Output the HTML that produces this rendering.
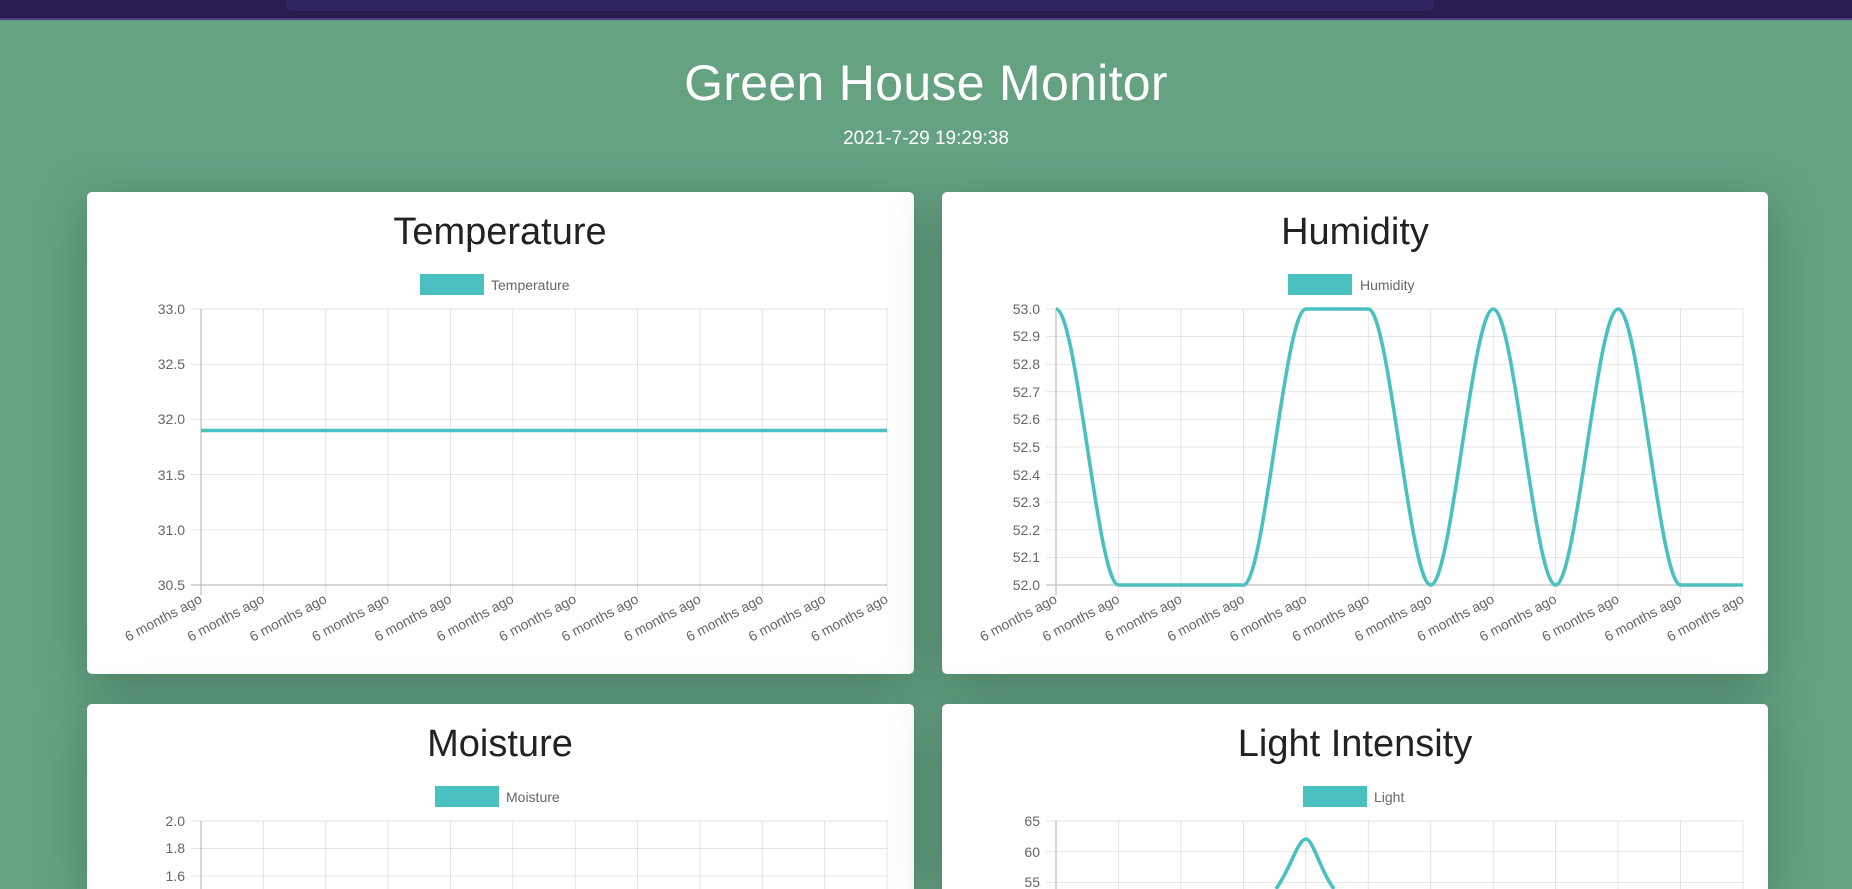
<!DOCTYPE html>
<html><head><meta charset="utf-8"><style>
html,body{margin:0;padding:0;overflow:hidden}
body{width:1852px;height:889px;overflow:hidden;position:relative;background:#65a282;font-family:"Liberation Sans",sans-serif}
.top{position:absolute;left:0;top:0;width:1852px;height:18px;background:#2a1c50;border-bottom:2px solid #4a3d80}
.top .in{position:absolute;left:286px;top:0;width:1148px;height:11px;background:#302560;border-radius:0 0 6px 6px}
.card{position:absolute;background:#fff;border-radius:5px;box-shadow:0 12px 50px rgba(30,60,45,0.35)}
.cut{border-radius:5px 5px 0 0}
h1{position:absolute;left:0;width:1852px;top:54px;margin:0;text-align:center;color:#fff;font-weight:300;font-size:50px;letter-spacing:0.3px}
.sub{position:absolute;left:0;width:1852px;top:128px;text-align:center;color:#fff;font-size:19px}
svg{position:absolute;left:0;top:0}
</style></head><body>
<div class="top"><div class="in"></div></div>
<h1>Green House Monitor</h1>
<div class="sub">2021-7-29 19:29:38</div>
<div class="card" style="left:87px;top:192px;width:827px;height:482px"></div>
<div class="card" style="left:942px;top:192px;width:826px;height:482px"></div>
<div class="card cut" style="left:87px;top:704px;width:827px;height:185px"></div>
<div class="card cut" style="left:942px;top:704px;width:826px;height:185px"></div>
<svg width="1852" height="889" viewBox="0 0 1852 889" font-family="Liberation Sans, sans-serif">
<g font-size="38" fill="#222" text-anchor="middle">
<text x="500" y="244">Temperature</text>
<text x="1355" y="244">Humidity</text>
<text x="500" y="756">Moisture</text>
<text x="1355" y="756">Light Intensity</text>
</g>
<g fill="#4bc0c0">
<rect x="420" y="274" width="64" height="21"/>
<rect x="1288" y="274" width="64" height="21"/>
<rect x="435" y="786" width="64" height="21"/>
<rect x="1303" y="786" width="64" height="21"/>
</g>
<g font-size="14" fill="#666">
<text x="491" y="290">Temperature</text>
<text x="1360" y="290">Humidity</text>
<text x="506" y="802">Moisture</text>
<text x="1374" y="802">Light</text>
</g>
<g stroke="rgba(0,0,0,0.1)" stroke-width="1" fill="none">
<path d="M263.4,309V595M325.7,309V595M388.1,309V595M450.5,309V595M512.8,309V595M575.2,309V595M637.5,309V595M699.9,309V595M762.3,309V595M824.6,309V595M887,309V595"/>
<path d="M191,309H887M191,364.2H887M191,419.4H887M191,474.6H887M191,529.8H887"/>
<path d="M1118.5,309V595M1180.9,309V595M1243.4,309V595M1305.8,309V595M1368.3,309V595M1430.7,309V595M1493.2,309V595M1555.6,309V595M1618.1,309V595M1680.5,309V595M1743,309V595"/>
<path d="M1046,309H1743M1046,336.6H1743M1046,364.2H1743M1046,391.8H1743M1046,419.4H1743M1046,447H1743M1046,474.6H1743M1046,502.2H1743M1046,529.8H1743M1046,557.4H1743"/>
<path d="M263.4,821V889M325.7,821V889M388.1,821V889M450.5,821V889M512.8,821V889M575.2,821V889M637.5,821V889M699.9,821V889M762.3,821V889M824.6,821V889M887,821V889"/>
<path d="M191,821H887M191,848.5H887M191,876H887"/>
<path d="M1118.5,821V889M1180.9,821V889M1243.4,821V889M1305.8,821V889M1368.3,821V889M1430.7,821V889M1493.2,821V889M1555.6,821V889M1618.1,821V889M1680.5,821V889M1743,821V889"/>
<path d="M1046,821H1743M1046,851.7H1743M1046,882.4H1743"/>
</g>
<g stroke="rgba(0,0,0,0.25)" stroke-width="1.2" fill="none">
<path d="M201,309V595M191,585H887"/>
<path d="M1056,309V595M1046,585H1743"/>
<path d="M201,821V889M1056,821V889"/>
</g>
<g font-size="14" fill="#666" text-anchor="end">
<text x="185" y="314">33.0</text><text x="185" y="369">32.5</text><text x="185" y="424">32.0</text><text x="185" y="480">31.5</text><text x="185" y="535">31.0</text><text x="185" y="590">30.5</text>
<text x="1040" y="314">53.0</text><text x="1040" y="341">52.9</text><text x="1040" y="369">52.8</text><text x="1040" y="397">52.7</text><text x="1040" y="424">52.6</text><text x="1040" y="452">52.5</text><text x="1040" y="480">52.4</text><text x="1040" y="507">52.3</text><text x="1040" y="535">52.2</text><text x="1040" y="562">52.1</text><text x="1040" y="590">52.0</text>
<text x="185" y="826">2.0</text><text x="185" y="853">1.8</text><text x="185" y="881">1.6</text>
<text x="1040" y="826">65</text><text x="1040" y="857">60</text><text x="1040" y="887">55</text>
</g>
<g font-size="14" fill="#666" text-anchor="end">
<text transform="translate(203,602) rotate(-28)">6 months ago</text>
<text transform="translate(265.4,602) rotate(-28)">6 months ago</text>
<text transform="translate(327.7,602) rotate(-28)">6 months ago</text>
<text transform="translate(390.1,602) rotate(-28)">6 months ago</text>
<text transform="translate(452.5,602) rotate(-28)">6 months ago</text>
<text transform="translate(514.8,602) rotate(-28)">6 months ago</text>
<text transform="translate(577.2,602) rotate(-28)">6 months ago</text>
<text transform="translate(639.5,602) rotate(-28)">6 months ago</text>
<text transform="translate(701.9,602) rotate(-28)">6 months ago</text>
<text transform="translate(764.3,602) rotate(-28)">6 months ago</text>
<text transform="translate(826.6,602) rotate(-28)">6 months ago</text>
<text transform="translate(889,602) rotate(-28)">6 months ago</text>
<text transform="translate(1058,602) rotate(-28)">6 months ago</text>
<text transform="translate(1120.5,602) rotate(-28)">6 months ago</text>
<text transform="translate(1182.9,602) rotate(-28)">6 months ago</text>
<text transform="translate(1245.4,602) rotate(-28)">6 months ago</text>
<text transform="translate(1307.8,602) rotate(-28)">6 months ago</text>
<text transform="translate(1370.3,602) rotate(-28)">6 months ago</text>
<text transform="translate(1432.7,602) rotate(-28)">6 months ago</text>
<text transform="translate(1495.2,602) rotate(-28)">6 months ago</text>
<text transform="translate(1557.6,602) rotate(-28)">6 months ago</text>
<text transform="translate(1620.1,602) rotate(-28)">6 months ago</text>
<text transform="translate(1682.5,602) rotate(-28)">6 months ago</text>
<text transform="translate(1745,602) rotate(-28)">6 months ago</text>
</g>
<g stroke="#4bc0c0" stroke-width="3.6" fill="none" stroke-linejoin="round">
<path d="M201,430.5H887"/>
<path d="M1056,309 C1076.8,309 1097.7,585 1118.5,585 L1243.4,585 C1264.2,585 1285,309 1305.8,309 L1368.3,309 C1389.1,309 1409.9,585 1430.7,585 C1451.5,585 1472.4,309 1493.2,309 C1514,309 1534.8,585 1555.6,585 C1576.4,585 1597.3,309 1618.1,309 C1638.9,309 1659.7,585 1680.5,585 L1743,585"/>
<path d="M1276,889 C1290,870 1298,839 1305.8,839 C1313,839 1320,870 1334,889"/>
</g>
</svg>
</body></html>
